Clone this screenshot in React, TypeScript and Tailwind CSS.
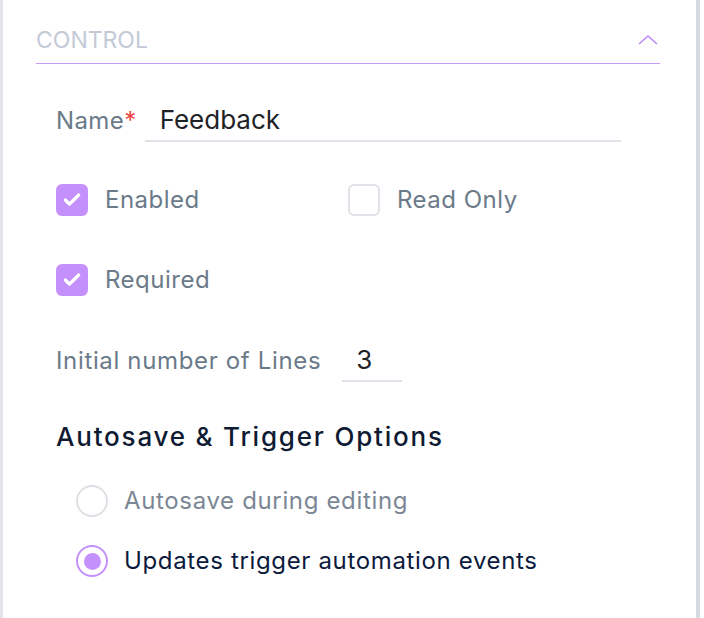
import { Check } from "lucide-react";

const font = { fontFamily: "Inter, 'Noto Sans', sans-serif" };

function Checkbox({ checked, label }: { checked: boolean; label: string }) {
  return (
    <label className="flex items-center gap-[17px]">
      {checked ? (
        <span className="flex h-[32px] w-[32px] items-center justify-center rounded-[6px] bg-[#c490fb]">
          <Check className="h-[20px] w-[20px] text-white" strokeWidth={4} />
        </span>
      ) : (
        <span className="h-[32px] w-[32px] rounded-[6px] border-2 border-[#dfe3e8] bg-white" />
      )}
      <span className="text-[24px] tracking-[0.5px] text-[#6b7a89]">{label}</span>
    </label>
  );
}

function Radio({ checked, label }: { checked: boolean; label: string }) {
  return (
    <label className="flex items-center gap-[16px]">
      <span
        className={
          checked
            ? "flex h-[32px] w-[32px] items-center justify-center rounded-full border-2 border-[#c490fb]"
            : "h-[32px] w-[32px] rounded-full border-2 border-[#dcdfe4]"
        }
      >
        {checked && <span className="h-[17px] w-[17px] rounded-full bg-[#c490fb]" />}
      </span>
      <span
        className={
          checked
            ? "text-[24px] tracking-[0.65px] text-[#0c1a3d]"
            : "text-[24px] tracking-[0.65px] text-[#7b8794]"
        }
      >
        {label}
      </span>
    </label>
  );
}

export default function App() {
  return (
    <div className="flex h-[618px] w-[704px] bg-white" style={font}>
      <div className="w-[3px] bg-[#e3e5e8]" />
      <div className="flex-1 pl-[33px] pr-[36px]">
        <div className="flex h-[64px] items-end justify-between border-b border-[#c49bf0]">
          <span className="pb-[6px] text-[23px] uppercase text-[#c3cad6]">Control</span>
          <svg width="20" height="12" viewBox="0 0 20 12" className="mb-[17px] mr-[2px]">
            <path d="M1 10 L10 2 L19 10" fill="none" stroke="#c084fc" strokeWidth="1.5" />
          </svg>
        </div>

        <div className="pl-[20px]">
          <div className="mt-[36px] flex items-end">
            <span className="pb-[3px] text-[24px] tracking-[0.4px] text-[#6b7a89]">
              Name<span className="text-[#ef4444]">*</span>
            </span>
            <div className="ml-[8px] w-[476px] border-b-2 border-[#dfe3e8] pb-[1px] pl-[15px] text-[26px] text-[#1f2328]">
              Feedback
            </div>
          </div>

          <div className="mt-[40px] grid grid-cols-[292px_1fr]">
            <Checkbox checked label="Enabled" />
            <Checkbox checked={false} label="Read Only" />
          </div>
          <div className="mt-[44px]">
            <Checkbox checked label="Required" />
          </div>

          <div className="mt-[42px] flex items-end">
            <span className="pb-[3px] text-[24px] tracking-[0.65px] text-[#6b7a89]">Initial number of Lines</span>
            <div className="ml-[21px] w-[60px] border-b-2 border-[#dfe3e8] pb-[1px] pl-[14px] text-[26px] text-[#1f2328]">
              3
            </div>
          </div>

          <h3 className="mt-[35px] text-[26px] font-medium tracking-[1.8px] text-[#0f1a33]">
            Autosave &amp; Trigger Options
          </h3>

          <div className="mt-[27px] flex flex-col gap-[24px] pl-[20px]">
            <Radio checked={false} label="Autosave during editing" />
            <Radio checked label="Updates trigger automation events" />
          </div>
        </div>
      </div>
      <div className="w-[4px] bg-[#d5dbe2]" />
      <div className="w-[4px]" />
    </div>
  );
}
